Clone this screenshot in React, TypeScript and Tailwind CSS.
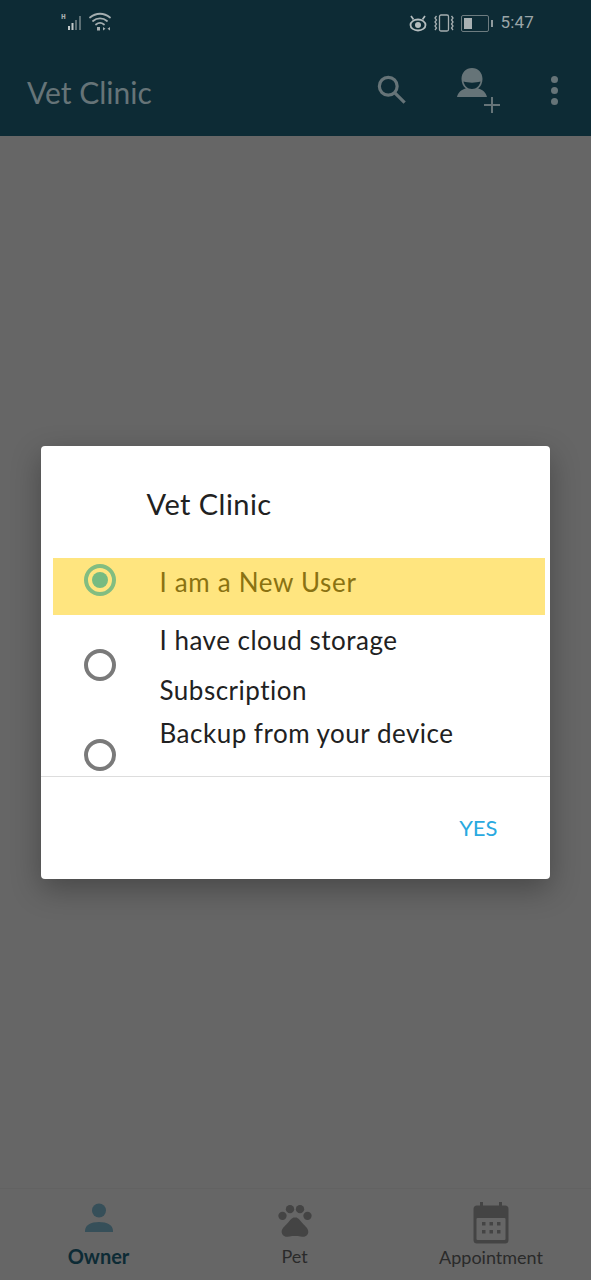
import { MdPets } from "react-icons/md";

const font = { fontFamily: '"Lato", "Noto Sans", sans-serif' };

function SignalIcon() {
  return (
    <svg width="52" height="24" viewBox="0 0 52 24">
      <text x="0" y="8" fontSize="8" fontWeight="700" fill="#a5aeb0" fontFamily="Liberation Mono, monospace">H</text>
      <rect x="7" y="15" width="2" height="4" fill="#c2c9ca" />
      <rect x="10.500" y="12" width="2" height="7" fill="#c2c9ca" />
      <rect x="14" y="9" width="2" height="10" fill="#5c6f74" />
      <rect x="18" y="5" width="2" height="14" fill="#5c6f74" />
      <g fill="none" stroke="#a5aeb0" strokeWidth="1.800" strokeLinecap="round">
        <path d="M29 6.500c6-5 14-5 20 0" />
        <path d="M32 10c4-3.500 10-3.500 14 0" />
        <path d="M35 13.500c2.500-2 5.500-2 8 0" />
      </g>
      <rect x="36" y="16" width="3" height="3.500" fill="#a5aeb0" />
      <path d="M42 16l2.500 1.800-2.500 1.800zM49 16l-2.500 1.800 2.500 1.800z" fill="#a5aeb0" />
    </svg>
  );
}

function EyeIcon() {
  return (
    <svg width="18" height="17" viewBox="0 0 18 17" fill="none" stroke="#b5bdbf">
      <ellipse cx="9" cy="10" rx="7.500" ry="5.500" strokeWidth="1.800" />
      <circle cx="9" cy="10" r="3" fill="#b5bdbf" stroke="none" />
      <path d="M2 1l2.500 3.500M16 1l-2.500 3.500" strokeWidth="1.700" />
    </svg>
  );
}

function VibrateIcon() {
  return (
    <svg width="22" height="18" viewBox="0 0 22 18" fill="none" stroke="#a5aeb0" strokeWidth="1.300">
      <rect x="6.500" y="1" width="9" height="16" rx="1.500" />
      <path d="M3.500 2l-1.500 2 1.500 2-1.500 2 1.500 2-1.500 2 1.500 2-1.500 2M18.500 2l1.500 2-1.500 2 1.500 2-1.500 2 1.500 2-1.500 2 1.500 2" />
    </svg>
  );
}

function BatteryIcon() {
  return (
    <div className="flex items-center gap-[2px]">
      <div className="w-[28px] h-[17px] rounded-[2px] border border-[#6d7c80] p-[2px]">
        <div className="w-[8px] h-full bg-[#a9b1b3]" />
      </div>
      <div className="w-[2px] h-[7px] bg-[#8f9a9d]" />
    </div>
  );
}

function AddUserIcon() {
  return (
    <svg width="44" height="46" viewBox="0 0 44 46">
      <path
        d="M15 0c-6 0-10.500 4.500-10.500 11 0 4 1.700 7.400 4.300 9.400C4.200 21.500 1 24.500 0 29h30c-1-4.500-4.200-7.500-8.800-8.600 2.600-2 4.300-5.400 4.300-9.400C25.500 4.500 21 0 15 0z"
        fill="#667478"
      />
      <path d="M6.500 13.500c5 1.500 12 1.500 17 0-.7 4-4 7.500-8.500 7.500s-7.800-3.500-8.500-7.500z" fill="#0d2b35" />
      <path d="M35 29v16M27 37h16" stroke="#667478" strokeWidth="2" />
    </svg>
  );
}

function CalendarIcon() {
  return (
    <svg width="36" height="42" viewBox="0 0 36 42">
      <rect x="0.500" y="3.500" width="35" height="38" rx="3.500" fill="#444444" />
      <rect x="7" y="0" width="3" height="7" fill="#444444" />
      <rect x="26" y="0" width="3" height="7" fill="#444444" />
      <rect x="3.500" y="16" width="29" height="22" rx="1" fill="#666666" />
      {[9, 16.500, 24].map((x) =>
        [20, 28].map((y) => <rect key={`${x}-${y}`} x={x} y={y} width="3.500" height="3.500" fill="#444444" />)
      )}
    </svg>
  );
}

function OwnerIcon() {
  return (
    <svg width="28" height="30" viewBox="0 0 28 30" fill="#364f59">
      <circle cx="14" cy="7.500" r="7" />
      <path d="M0 28c0-6 6-9 14-9s14 3 14 9v1H0z" />
    </svg>
  );
}

function Radio({ checked }: { checked?: boolean }) {
  if (checked) {
    return (
      <div className="w-[32px] h-[32px] rounded-full border-[4px] border-[#82bd81] flex items-center justify-center">
        <div className="w-[16px] h-[16px] rounded-full bg-[#76bb81]" />
      </div>
    );
  }
  return <div className="w-[32px] h-[32px] rounded-full border-[4px] border-[#7a7a7a]" />;
}

export default function App() {
  return (
    <div className="w-[591px] h-[1280px] flex flex-col bg-[#666666] overflow-hidden" style={font}>
      {/* App bar */}
      <div className="h-[136px] bg-[#0d2b35] flex flex-col shrink-0">
        <div className="h-[46px] flex items-center justify-between pl-[61px] pr-[57px]">
          <SignalIcon />
          <div className="flex items-center gap-[6px]">
            <EyeIcon />
            <VibrateIcon />
            <BatteryIcon />
            <span className="text-[17px] text-[#9aa5a8] ml-[1px] tracking-[0.2px]" style={{ fontFamily: "Roboto, sans-serif" }}>5:47</span>
          </div>
        </div>
        <div className="flex-1 flex items-center pl-[27px] pr-[33px] pt-[2px]">
          <h1 className="text-[30px] text-[#667478] flex-1 font-normal">Vet Clinic</h1>
          <svg width="30" height="30" viewBox="0 0 32 32" fill="none" stroke="#667478" strokeWidth="3.400" className="mr-[50px] -mt-[4px]">
            <circle cx="12" cy="12" r="9.500" />
            <path d="M19 19l10.500 10.500" />
          </svg>
          <div className="mr-[50px] -mt-[2px]">
            <AddUserIcon />
          </div>
          <div className="flex flex-col gap-[4px] -mt-[4px]">
            <div className="w-[7px] h-[7px] rounded-full bg-[#667478]" />
            <div className="w-[7px] h-[7px] rounded-full bg-[#667478]" />
            <div className="w-[7px] h-[7px] rounded-full bg-[#667478]" />
          </div>
        </div>
      </div>

      {/* Dialog */}
      <div className="flex-1 flex items-center justify-center pr-[1px]">
        <div className="w-[509px] h-[433px] bg-white rounded-[4px] flex flex-col shadow-[0_10px_30px_rgba(0,0,0,0.3)] overflow-hidden">
          <h2 className="h-[112px] pl-[106px] pt-[35px] text-[29px] leading-[46px] tracking-[0.45px] text-[#212121] font-normal shrink-0">Vet Clinic</h2>
          <div className="h-[219px] border-b border-[#dddddd] shrink-0 overflow-hidden text-[26px] tracking-[0.5px] text-[#212121]">
            <div className="h-[57px] mx-[12px] mr-[5px] bg-[#ffe57f] flex items-start pl-[31px] text-[#8a7212]">
              <div className="mt-[6px]">
                <Radio checked />
              </div>
              <span className="ml-[44px] mt-[5px] leading-[38px] tracking-[0.67px]">I am a New User</span>
            </div>
            <div className="h-[93px] flex items-center pl-[43px]">
              <div className="mt-[8px]">
                <Radio />
              </div>
              <div className="ml-[44px] leading-[50px] mt-[7px]">
                <div>I have cloud storage</div>
                <div>Subscription</div>
              </div>
            </div>
            <div className="flex items-start pl-[43px]">
              <div className="mt-[31px]">
                <Radio />
              </div>
              <span className="ml-[44px] leading-[50px]">Backup from your device</span>
            </div>
          </div>
          <div className="flex-1 flex items-center justify-end pr-[52px]">
            <span className="text-[22px] text-[#29a9e0]">YES</span>
          </div>
        </div>
      </div>

      {/* Bottom tabs */}
      <div className="h-[92px] shrink-0 border-t border-[#626262] flex">
        <div className="w-[197px] flex flex-col items-center pt-[14px]">
          <OwnerIcon />
          <span className="text-[20px] leading-[28px] font-bold text-[#0d2b35] mt-[9px]">Owner</span>
        </div>
        <div className="flex-1 flex flex-col items-center pt-[11px] pr-[2px]">
          <MdPets size={40} color="#444444" />
          <span className="text-[18px] leading-[26px] text-[#2a2a2a] mt-[3px]">Pet</span>
        </div>
        <div className="w-[197px] flex flex-col items-center pt-[13px] pr-[3px]">
          <CalendarIcon />
          <span className="text-[18px] leading-[26px] text-[#2a2a2a]">Appointment</span>
        </div>
      </div>
    </div>
  );
}
